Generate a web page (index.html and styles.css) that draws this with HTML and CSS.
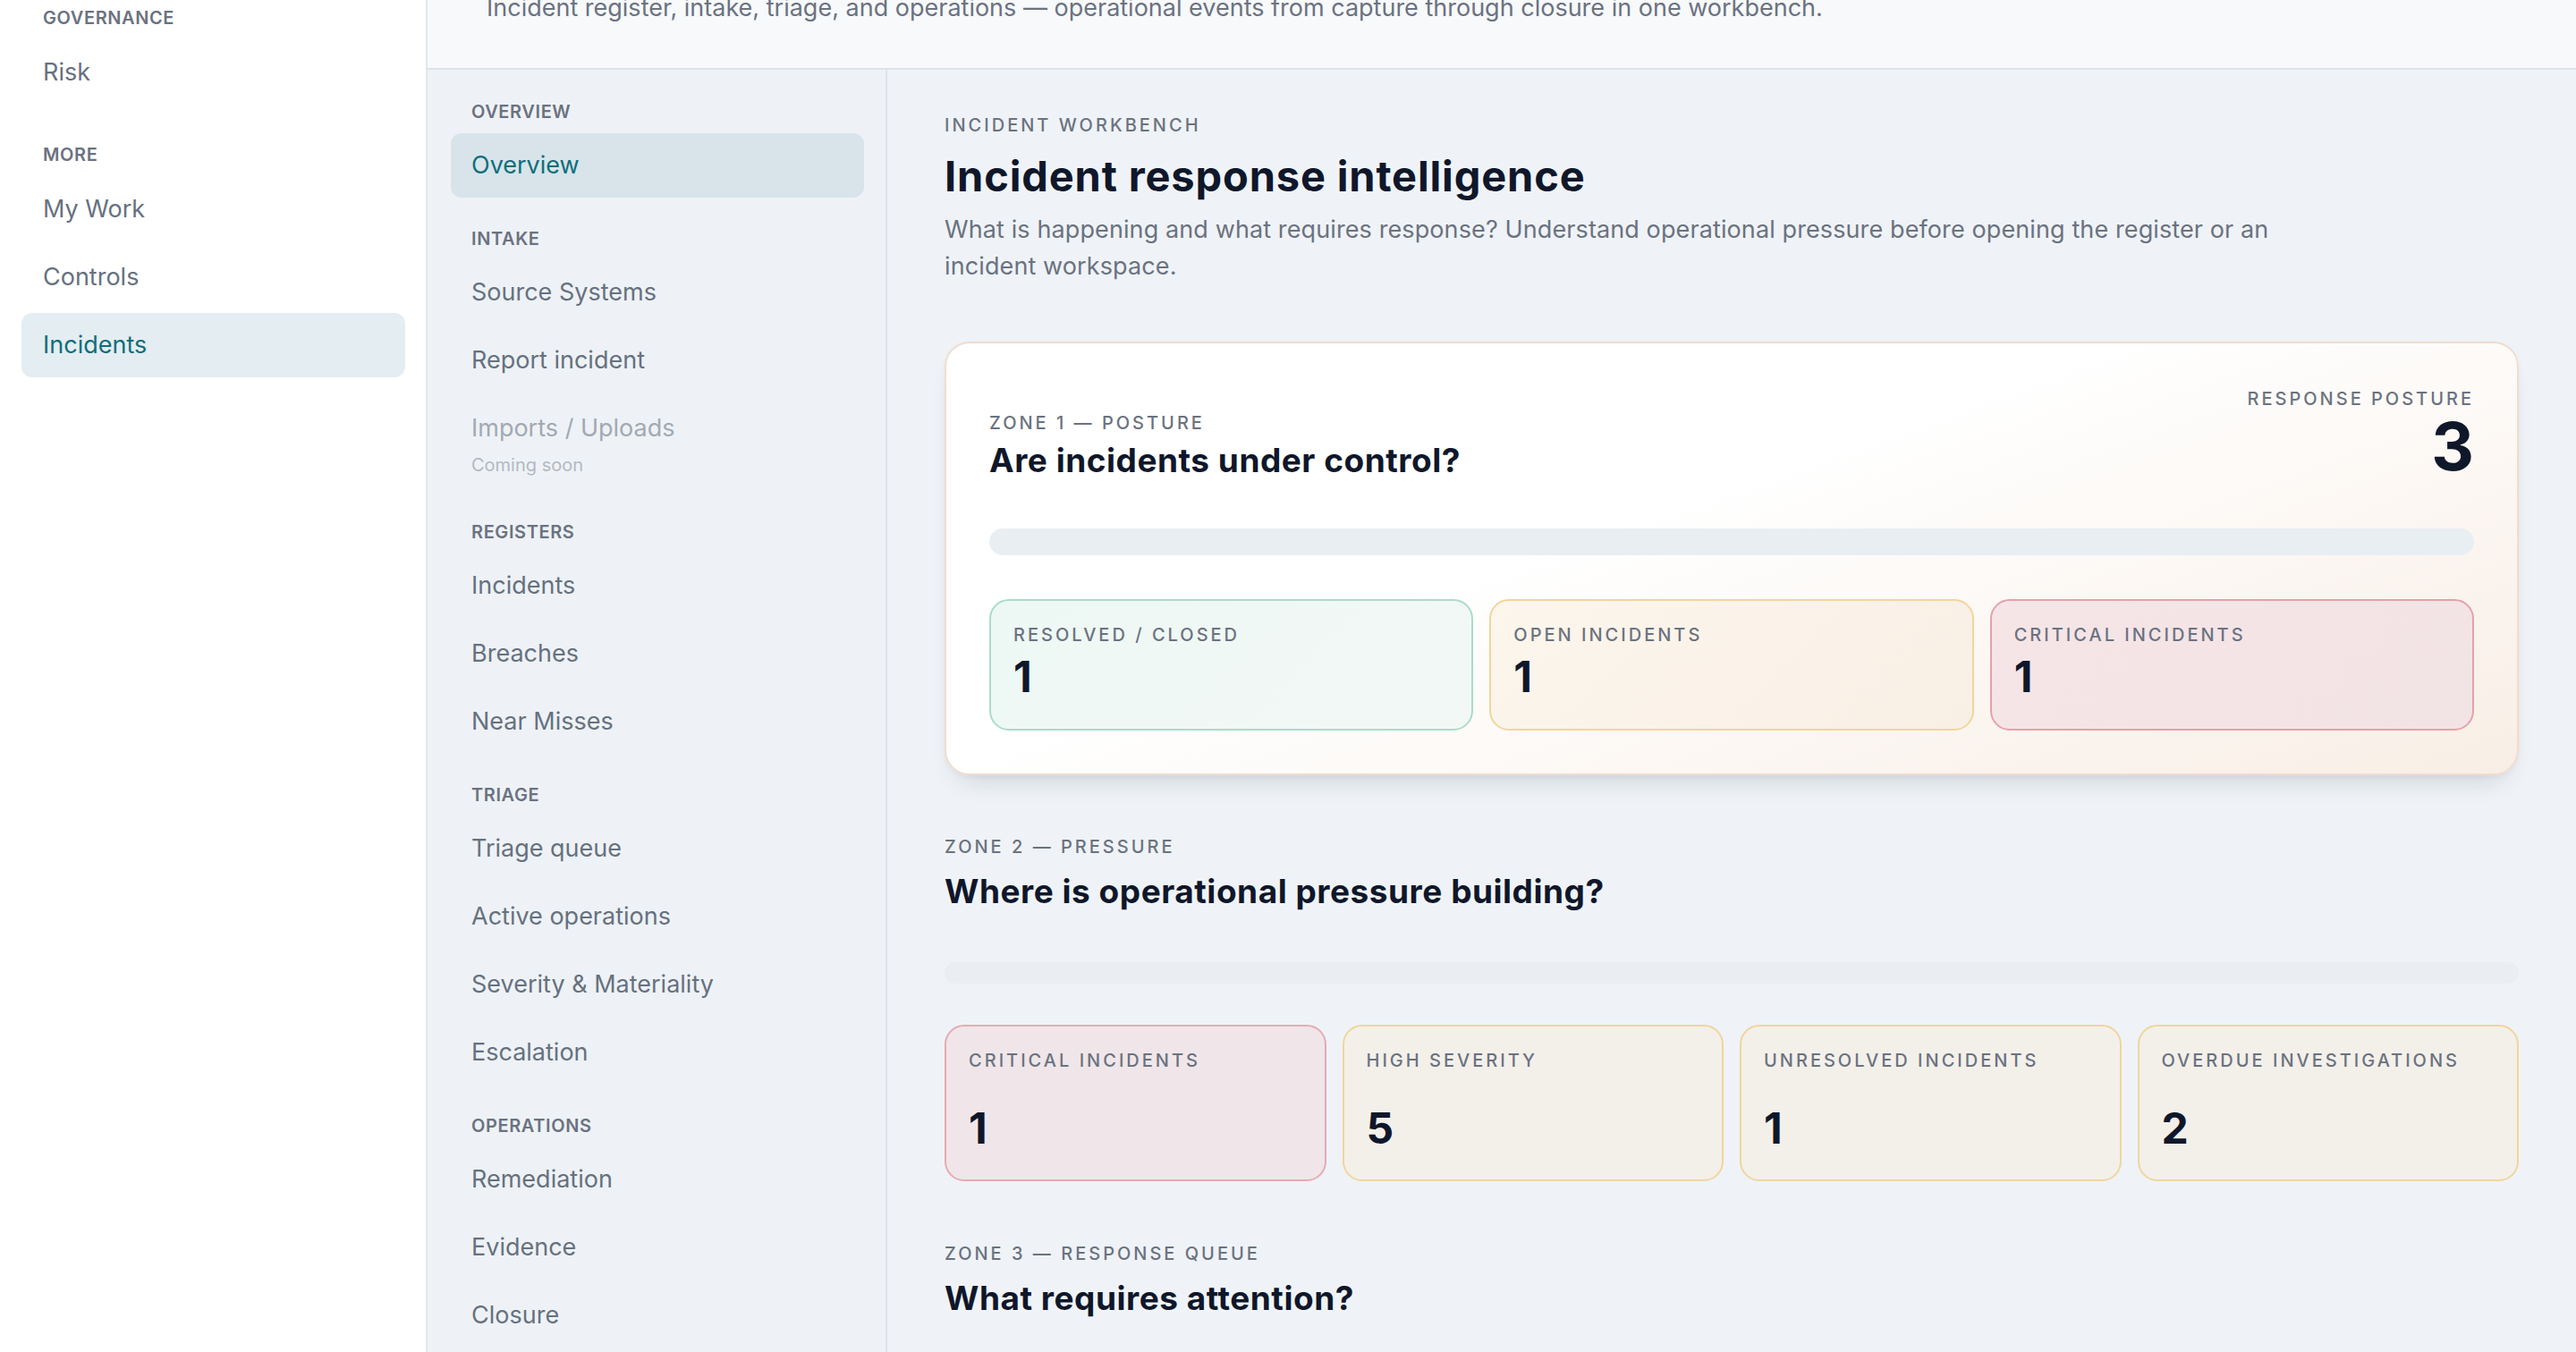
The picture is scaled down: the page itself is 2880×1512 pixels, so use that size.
FILE: index.html
```html
<!DOCTYPE html>
<html lang="en">
<head>
<meta charset="utf-8">
<title>Incident response intelligence</title>
<link rel="stylesheet" href="styles.css">
</head>
<body>
<div class="app">
  <aside class="sidebar">
    <div class="nav-group">
      <div class="nav-label">GOVERNANCE</div>
      <a class="nav-item">Risk</a>
    </div>
    <div class="nav-group">
      <div class="nav-label">MORE</div>
      <a class="nav-item">My Work</a>
      <a class="nav-item">Controls</a>
      <a class="nav-item active">Incidents</a>
    </div>
  </aside>

  <div class="main">
    <header class="topbar">
      <p>Incident register, intake, triage, and operations — operational events from capture through closure in one workbench.</p>
    </header>

    <div class="workspace">
      <nav class="subnav">
        <div class="nav-group">
          <div class="nav-label">OVERVIEW</div>
          <a class="nav-item active">Overview</a>
        </div>
        <div class="nav-group">
          <div class="nav-label">INTAKE</div>
          <a class="nav-item">Source Systems</a>
          <a class="nav-item">Report incident</a>
          <a class="nav-item disabled"><span class="item-title">Imports / Uploads</span><span class="item-sub">Coming soon</span></a>
        </div>
        <div class="nav-group">
          <div class="nav-label">REGISTERS</div>
          <a class="nav-item">Incidents</a>
          <a class="nav-item">Breaches</a>
          <a class="nav-item">Near Misses</a>
        </div>
        <div class="nav-group">
          <div class="nav-label">TRIAGE</div>
          <a class="nav-item">Triage queue</a>
          <a class="nav-item">Active operations</a>
          <a class="nav-item">Severity &amp; Materiality</a>
          <a class="nav-item">Escalation</a>
        </div>
        <div class="nav-group">
          <div class="nav-label">OPERATIONS</div>
          <a class="nav-item">Remediation</a>
          <a class="nav-item">Evidence</a>
          <a class="nav-item">Closure</a>
        </div>
      </nav>

      <main class="content">
        <div class="eyebrow">INCIDENT WORKBENCH</div>
        <h1 class="page-title">Incident response intelligence</h1>
        <p class="page-desc">What is happening and what requires response? Understand operational pressure before opening the register or an incident workspace.</p>

        <section class="posture-card">
          <div class="posture-head">
            <div class="posture-left">
              <div class="zone-label">ZONE 1 — POSTURE</div>
              <h2 class="zone-title tight">Are incidents under control?</h2>
            </div>
            <div class="posture-right">
              <div class="zone-label">RESPONSE POSTURE</div>
              <div class="posture-value">3</div>
            </div>
          </div>
          <div class="posture-track"></div>
          <div class="metric-grid three">
            <div class="metric mint">
              <div class="metric-label">RESOLVED / CLOSED</div>
              <div class="metric-value">1</div>
            </div>
            <div class="metric amber">
              <div class="metric-label">OPEN INCIDENTS</div>
              <div class="metric-value">1</div>
            </div>
            <div class="metric rose">
              <div class="metric-label">CRITICAL INCIDENTS</div>
              <div class="metric-value">1</div>
            </div>
          </div>
        </section>

        <section class="zone">
          <div class="zone-label">ZONE 2 — PRESSURE</div>
          <h2 class="zone-title">Where is operational pressure building?</h2>
          <div class="pressure-track"></div>
          <div class="metric-grid four">
            <div class="metric tall rose-soft">
              <div class="metric-label">CRITICAL INCIDENTS</div>
              <div class="metric-value">1</div>
            </div>
            <div class="metric tall amber-soft">
              <div class="metric-label">HIGH SEVERITY</div>
              <div class="metric-value">5</div>
            </div>
            <div class="metric tall amber-soft">
              <div class="metric-label">UNRESOLVED INCIDENTS</div>
              <div class="metric-value">1</div>
            </div>
            <div class="metric tall amber-soft">
              <div class="metric-label">OVERDUE INVESTIGATIONS</div>
              <div class="metric-value">2</div>
            </div>
          </div>
        </section>

        <section class="zone zone-last">
          <div class="zone-label">ZONE 3 — RESPONSE QUEUE</div>
          <h2 class="zone-title">What requires attention?</h2>
        </section>
      </main>
    </div>
  </div>
</div>
</body>
</html>
```

FILE: styles.css
```css
* {
  box-sizing: border-box;
  margin: 0;
  padding: 0;
}

html, body {
  height: 100%;
}

body {
  font-family: Inter, "Noto Sans", "Liberation Sans", sans-serif;
  background: #eff3f7;
  color: #111827;
  overflow: hidden;
}

.app {
  display: grid;
  grid-template-columns: 478px 1fr;
  height: 1512px;
  overflow: hidden;
}

/* ---------- Left sidebar ---------- */
.sidebar {
  background: #ffffff;
  border-right: 2px solid #e3e7ec;
  padding: 8px 23px 0 24px;
  display: flex;
  flex-direction: column;
  gap: 44px;
}

.nav-group {
  display: flex;
  flex-direction: column;
  gap: 4px;
}

.nav-label {
  font-size: 20px;
  line-height: 24px;
  font-weight: 600;
  color: #6b7280;
  letter-spacing: 0.03em;
  padding-left: 24px;
  margin-bottom: 9px;
}

.nav-item {
  display: block;
  height: 72px;
  line-height: 72px;
  padding-left: 24px;
  font-size: 27px;
  color: #66717f;
  border-radius: 12px;
  white-space: nowrap;
}

.nav-item.active {
  background: #e4edf2;
  color: #0f6e7a;
}

/* ---------- Main column ---------- */
.main {
  display: flex;
  flex-direction: column;
  min-width: 0;
}

.topbar {
  height: 78px;
  flex: none;
  background: #f7f9fb;
  border-bottom: 2px solid #dde3e9;
  display: flex;
  align-items: flex-end;
  padding: 0 66px 49px;
  overflow: hidden;
}

.topbar p {
  font-size: 27px;
  line-height: 36px;
  color: #6b7280;
  white-space: nowrap;
}

.workspace {
  flex: 1;
  display: grid;
  grid-template-columns: 514px 1fr;
  min-height: 0;
}

/* ---------- Sub navigation ---------- */
.subnav {
  background: #eef2f6;
  border-right: 2px solid #dfe4ea;
  padding: 35px 24px 0 26px;
  display: flex;
  flex-direction: column;
  gap: 34px;
}

.subnav .nav-label {
  padding-left: 23px;
  margin-bottom: 8px;
}

.subnav .nav-item {
  padding-left: 23px;
}

.subnav .nav-item.active {
  background: #d8e4ea;
}

.nav-item.disabled {
  height: auto;
  line-height: normal;
  padding-top: 18px;
  padding-bottom: 16px;
  display: flex;
  flex-direction: column;
}

.item-title {
  line-height: 36px;
  color: #a2a9b3;
}

.item-sub {
  margin-top: 10px;
  font-size: 20px;
  line-height: 26px;
  color: #b3b9c1;
}

/* ---------- Content ---------- */
.content {
  padding: 49px 64px 0 64px;
  min-width: 0;
}

.eyebrow,
.zone-label {
  font-size: 20px;
  line-height: 24px;
  font-weight: 500;
  letter-spacing: 0.15em;
  color: #6b7280;
}

.eyebrow {
  line-height: 26px;
}

.page-title {
  margin-top: 16px;
  font-size: 47px;
  line-height: 56px;
  font-weight: 700;
  color: #0f172a;
  letter-spacing: 0.018em;
}

.page-desc {
  margin-top: 11px;
  max-width: 1510px;
  font-size: 27px;
  line-height: 41px;
  color: #6b7280;
  letter-spacing: 0.004em;
}

/* Zone 1 card */
.posture-card {
  margin-top: 64px;
  border: 2px solid #f1dccd;
  border-radius: 28px;
  background: linear-gradient(160deg, #ffffff 0%, #ffffff 42%, #fbf5f0 76%, #f8eee5 100%);
  padding: 50px 48px 48px;
  box-shadow: 0 18px 30px -16px rgba(15, 23, 42, 0.18), 0 2px 6px rgba(15, 23, 42, 0.04);
}

.posture-head {
  display: flex;
  justify-content: space-between;
  align-items: flex-end;
}

.posture-right {
  display: flex;
  flex-direction: column;
  align-items: flex-end;
}

.posture-value {
  margin-top: 5px;
  font-size: 74px;
  line-height: 72px;
  font-weight: 700;
  color: #0f172a;
}

.zone-title {
  margin-top: 14px;
  font-size: 37px;
  line-height: 48px;
  font-weight: 700;
  color: #0f172a;
  letter-spacing: 0.014em;
}

.zone-title.tight {
  margin-top: 10px;
  line-height: 40px;
}

.posture-track {
  margin-top: 56px;
  height: 30px;
  border-radius: 15px;
  background: #e9eef2;
}

.metric-grid {
  display: grid;
  gap: 18px;
}

.metric-grid.three {
  margin-top: 49px;
  grid-template-columns: repeat(3, 1fr);
}

.metric-grid.four {
  margin-top: 46px;
  grid-template-columns: repeat(4, 1fr);
}

.metric {
  border: 2px solid;
  border-radius: 22px;
  padding: 26px 26px 34px 25px;
  display: flex;
  flex-direction: column;
}

.metric-label {
  font-size: 20px;
  line-height: 24px;
  font-weight: 500;
  letter-spacing: 0.15em;
  color: #6b7280;
  white-space: nowrap;
}

.metric-value {
  margin-top: 11px;
  font-size: 48px;
  line-height: 48px;
  font-weight: 700;
  color: #0f172a;
}

.metric.tall {
  min-height: 175px;
  justify-content: space-between;
  padding-bottom: 33px;
}

.metric.mint {
  border-color: #a9dccb;
  background: linear-gradient(135deg, #edf8f4 0%, #f3f8f6 100%);
}

.metric.amber {
  border-color: #f1d59c;
  background: linear-gradient(135deg, #fdf6ec 0%, #f8efe5 100%);
}

.metric.rose {
  border-color: #e3a2aa;
  background: linear-gradient(135deg, #f6e5e7 0%, #f2e3e5 100%);
}

.metric.rose-soft {
  border-color: #e7aab2;
  background: #f0e6e9;
}

.metric.amber-soft {
  border-color: #f0d59d;
  background: #f3f0ea;
}

/* Zones 2 and 3 */
.zone {
  margin-top: 68px;
}

.zone-last {
  margin-top: 69px;
}

.pressure-track {
  margin-top: 55px;
  height: 24px;
  border-radius: 12px;
  background: #eaeef2;
}
```
